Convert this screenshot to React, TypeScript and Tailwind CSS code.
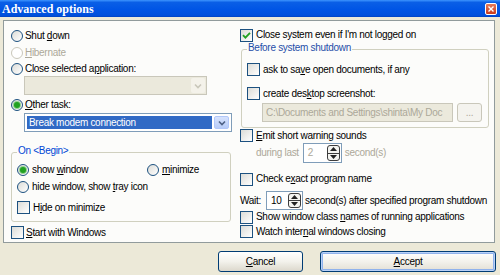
import React from "react";

type Kids = { children?: React.ReactNode };

function U({ children }: Kids) {
  return <span className="underline underline-offset-[1px]">{children}</span>;
}

function Radio({ checked = false, disabled = false }: { checked?: boolean; disabled?: boolean }) {
  return (
    <span
      className={
        disabled
          ? "flex h-[12px] w-[12px] shrink-0 items-center justify-center rounded-full border border-[#cac8bb] bg-white"
          : "flex h-[12px] w-[12px] shrink-0 items-center justify-center rounded-full border border-[#1c5180] bg-linear-to-br from-[#dcdcd7] to-white"
      }
    >
      {checked && <span className="h-[6px] w-[6px] rounded-full bg-[#21a121] shadow-[0_0_0_1px_#8fd18f]" />}
    </span>
  );
}

function Check({ checked = false }: { checked?: boolean }) {
  return (
    <span className="flex h-[13px] w-[13px] shrink-0 items-center justify-center border border-[#1c5180] bg-linear-to-br from-[#dcdcd7] to-white">
      {checked && (
        <svg width="9" height="9" viewBox="0 0 9 9">
          <path d="M1 4.2 L3.4 6.6 L8 1.8" fill="none" stroke="#21a121" strokeWidth="1.8" />
        </svg>
      )}
    </span>
  );
}

function Chevron({ color }: { color: string }) {
  return (
    <svg width="8" height="6" viewBox="0 0 8 6">
      <path d="M1 1.5 L4 4.5 L7 1.5" fill="none" stroke={color} strokeWidth="1.6" />
    </svg>
  );
}

function Spin({ value, disabled = false }: { value: string; disabled?: boolean }) {
  return (
    <div className="flex h-full w-full items-stretch border border-[#7f9db9] bg-white">
      <span className={disabled ? "flex flex-1 items-center pl-[4px] text-[#aca899]" : "flex flex-1 items-center pl-[4px]"}>
        {value}
      </span>
      <div className="my-[1px] mr-[1px] flex w-[13px] flex-col rounded-[3px] border border-[#3d3d3d] bg-[#f4f4f0]">
        <span className="flex flex-1 items-center justify-center border-b border-[#3d3d3d]">
          <svg width="7" height="4" viewBox="0 0 7 4">
            <path d="M0 4 L3.5 0 L7 4 Z" fill="#222" />
          </svg>
        </span>
        <span className="flex flex-1 items-center justify-center">
          <svg width="7" height="4" viewBox="0 0 7 4">
            <path d="M0 0 L3.5 4 L7 0 Z" fill="#222" />
          </svg>
        </span>
      </div>
    </div>
  );
}

export default function App() {
  const grey = "text-[#aca899]";

  return (
    <div className="flex h-[275px] w-[500px] flex-col overflow-hidden bg-[#ece9d8] font-['Liberation_Sans',Arial,sans-serif] text-[10px] leading-none tracking-[-0.3px] text-black">
      {/* title bar */}
      <div className="flex h-[17px] shrink-0 items-center bg-[linear-gradient(to_bottom,#3d95ff_0%,#0a5fe6_14%,#0055e5_55%,#0050dc_90%,#0042c2_100%)] pl-[2px] pr-[3px]">
        <span className="flex-1 font-['Liberation_Serif',serif] text-[12px] font-bold tracking-normal text-white">
          Advanced options
        </span>
        <span className="flex h-[12px] w-[12px] items-center justify-center rounded-[2px] border border-white bg-linear-to-b from-[#e57a5a] to-[#c8391a]">
          <svg width="6" height="6" viewBox="0 0 6 6">
            <path d="M0.5 0.5 L5.5 5.5 M5.5 0.5 L0.5 5.5" stroke="white" strokeWidth="1.4" />
          </svg>
        </span>
      </div>

      {/* page */}
      <div className="ml-[3px] mt-[3px] flex h-[223px] w-[492px] border border-[#919b9c] bg-[#fcfcfa]">
        {/* left column */}
        <div className="flex w-[233px] flex-col pl-[7px] pt-[6px]">
          <div className="flex h-[17px] items-center gap-[2px]">
            <Radio />
            <span>
              Shut <U>d</U>own
            </span>
          </div>
          <div className="flex h-[17px] items-center gap-[2px]">
            <Radio disabled />
            <span className={grey}>
              <U>H</U>ibernate
            </span>
          </div>
          <div className="flex h-[15px] items-center gap-[2px]">
            <Radio />
            <span>
              Close selected a<U>p</U>plication:
            </span>
          </div>
          <div className="ml-[13px] flex h-[19px] w-[183px] border border-[#c9c7ba] bg-[#ebe9dc] p-[1px]">
            <div className="flex-1" />
            <span className="flex w-[14px] items-center justify-center rounded-[2px] bg-[#f4f2ea]">
              <Chevron color="#c9c7ba" />
            </span>
          </div>

          <div className="mt-[2px] flex h-[16px] items-center gap-[2px]">
            <Radio checked />
            <span>
              <U>O</U>ther task:
            </span>
          </div>
          <div className="ml-[13px] flex h-[19px] w-[208px] border border-[#7f9db9] bg-white p-[2px]">
            <span className="flex flex-1 items-center bg-[#316ac5] pl-[2px] text-white">Break modem connection</span>
            <span className="ml-[2px] flex w-[15px] items-center justify-center rounded-[2px] border border-[#b1c7f9] bg-linear-to-b from-[#d7e3fd] to-[#b6cbf8]">
              <Chevron color="#4d6185" />
            </span>
          </div>

          <fieldset className="mt-[14px] w-[220px] rounded-[3px] border border-[#d0d0bf] pb-[5px] pl-[5px]">
            <legend className="h-[12px] px-[1px] text-[#0046d5]">On &lt;Begin&gt;</legend>
            <div className="mt-[4px] flex h-[16px] items-center">
              <div className="flex w-[130px] items-center gap-[3px]">
                <Radio checked />
                <span>
                  show <U>w</U>indow
                </span>
              </div>
              <div className="flex items-center gap-[3px]">
                <Radio />
                <span>
                  <U>m</U>inimize
                </span>
              </div>
            </div>
            <div className="flex h-[17px] items-center gap-[3px]">
              <Radio />
              <span>
                hide window, show <U>t</U>ray icon
              </span>
            </div>
            <div className="mt-[4px] flex h-[17px] items-center gap-[3px]">
              <Check />
              <span>
                H<U>i</U>de on minimize
              </span>
            </div>
          </fieldset>

          <div className="mt-[2px] flex h-[17px] items-center gap-[2px]">
            <Check />
            <span>
              <U>S</U>tart with Windows
            </span>
          </div>
        </div>

        {/* right column */}
        <div className="flex flex-1 flex-col pl-[3px] pt-[6px]">
          <div className="flex h-[16px] items-center gap-[3px]">
            <Check checked />
            <span>Close system even if I'm not logged on</span>
          </div>

          <fieldset className="ml-[1px] w-[248px] rounded-[3px] border border-[#d0d0bf] pb-[5px] pl-[5px]">
            <legend className="h-[12px] px-[1px] text-[#1f4ea8]">Before system shutdown</legend>
            <div className="mt-[6px] flex h-[17px] items-center gap-[3px]">
              <Check />
              <span>
                ask to sa<U>v</U>e open documents, if any
              </span>
            </div>
            <div className="mt-[7px] flex h-[17px] items-center gap-[3px]">
              <Check />
              <span>
                create des<U>k</U>top screenshot:
              </span>
            </div>
            <div className="ml-[15px] mt-[1px] flex h-[19px] items-stretch gap-[4px]">
              <span className={`flex w-[191px] items-center overflow-hidden whitespace-nowrap border border-[#c9c7ba] bg-[#ebe9dc] pl-[3px] ${grey}`}>
                C:\Documents and Settings\shinta\My Doc
              </span>
              <span className={`flex w-[25px] items-center justify-center rounded-[3px] border border-[#c9c7ba] bg-[#f4f3ee] ${grey}`}>
                ...
              </span>
            </div>
          </fieldset>

          <div className="flex h-[15px] items-center gap-[3px]">
            <Check />
            <span>
              <U>E</U>mit short warning sounds
            </span>
          </div>
          <div className="flex h-[20px] items-center">
            <span className={`ml-[16px] mr-[4px] whitespace-nowrap ${grey}`}>during last</span>
            <div className="h-[20px] w-[39px]">
              <Spin value="2" disabled />
            </div>
            <span className={`ml-[3px] ${grey}`}>second(s)</span>
          </div>

          <div className="mt-[8px] flex h-[16px] items-center gap-[3px]">
            <Check />
            <span>
              Check e<U>x</U>act program name
            </span>
          </div>
          <div className="mt-[4px] flex h-[19px] items-center">
            <span className="w-[26px]">Wait:</span>
            <div className="h-[19px] w-[37px]">
              <Spin value="10" />
            </div>
            <span className="ml-[2px]">second(s) after specified program shutdown</span>
          </div>
          <div className="flex h-[14px] items-center gap-[3px]">
            <Check />
            <span>
              Show window class <U>n</U>ames of running applications
            </span>
          </div>
          <div className="flex h-[15px] items-center gap-[3px]">
            <Check />
            <span>
              Watch inter<U>n</U>al windows closing
            </span>
          </div>
        </div>
      </div>

      {/* buttons */}
      <div className="mt-[8px] flex justify-end gap-[17px] pr-[4px]">
        <button className="flex h-[21px] w-[85px] items-center justify-center rounded-[3px] border border-[#003c74] bg-linear-to-b from-white via-[#f3f2ec] to-[#dcd8cc]">
          <span>
            <U>C</U>ancel
          </span>
        </button>
        <button className="flex h-[21px] w-[176px] items-center justify-center rounded-[3px] border border-[#003c74] bg-linear-to-b from-white via-[#f3f2ec] to-[#e2dfd4] shadow-[inset_0_0_0_1px_#b9d1f7,inset_0_0_0_2px_#8fb2ec]">
          <span>
            <U>A</U>ccept
          </span>
        </button>
      </div>
    </div>
  );
}
